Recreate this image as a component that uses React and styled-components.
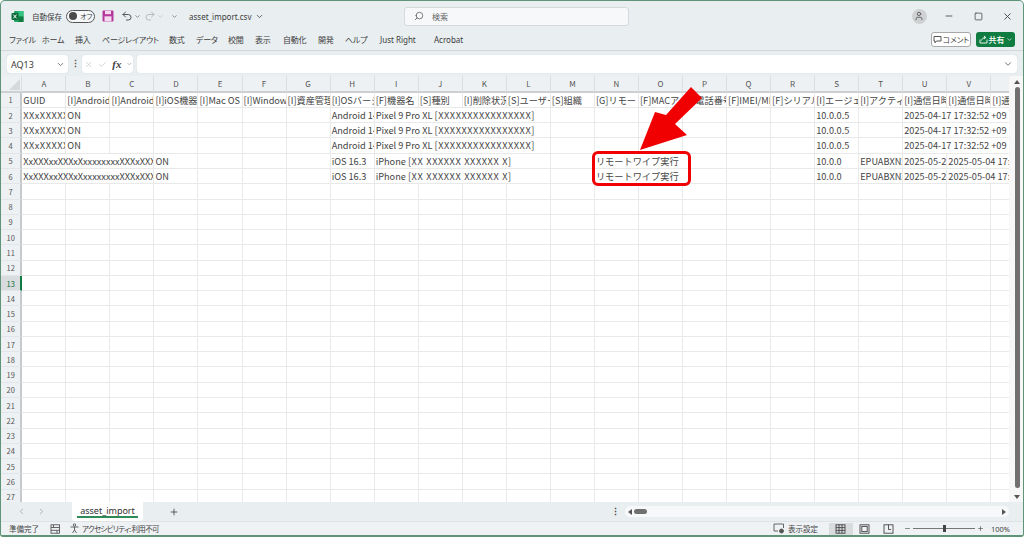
import React from "react";
import styled, { createGlobalStyle } from "styled-components";
import {
  ChevronDown,
  ChevronLeft,
  ChevronRight,
  Check,
  Minus,
  Plus,
  Redo2,
  Search,
  Square,
  Undo2,
  User,
  X,
} from "lucide-react";

const Global = createGlobalStyle`
  html, body { margin: 0; padding: 0; background: #fff; }
  body { font-family: "Noto Sans", "Noto Sans CJK JP", sans-serif; }
`;

const Window = styled.div`
  position: relative;
  box-sizing: border-box;
  width: 1024px;
  height: 537px;
  display: flex;
  flex-direction: column;
  overflow: hidden;
  background: #e9eef1;
  border: 1px solid #5f9478;
  border-bottom-width: 2px;
  border-radius: 5px 5px 3px 3px;
  color: #3c3c3c;
`;

const TitleBar = styled.div`
  height: 30px;
  flex: none;
  display: flex;
  align-items: center;
  padding: 0 0 0 10px;
  font-size: 8px;
  font-feature-settings: "palt";
`;

const AutoSave = styled.span`
  margin-left: 8px;
  width: 34px;
  font-size: 7.5px;
`;

const Toggle = styled.span`
  box-sizing: border-box;
  width: 29px;
  height: 13px;
  border: 1px solid #555;
  border-radius: 7px;
  display: flex;
  align-items: center;
  gap: 3px;
  padding-left: 2px;
  font-size: 7px;
  background: #f5f7f8;

  &::before {
    content: "";
    width: 8px;
    height: 8px;
    border-radius: 50%;
    background: #4a4a4a;
  }
`;

const TitleIcons = styled.div`
  display: flex;
  align-items: center;
  margin-left: 7px;
  width: 87px;
  color: #555;
`;

const FileName = styled.span`
  display: flex;
  align-items: center;
  gap: 4px;
  width: 215px;
  font-size: 8px;
`;

const SearchBox = styled.div`
  box-sizing: border-box;
  width: 225px;
  height: 19px;
  display: flex;
  align-items: center;
  gap: 8px;
  padding-left: 9px;
  background: #f6f8f9;
  border: 1px solid #d6d9db;
  border-radius: 3px;
  font-size: 8px;
  color: #666;
`;

const WindowControls = styled.div`
  margin-left: auto;
  display: flex;
  align-items: center;
  padding-right: 10px;
  gap: 19.5px;
  color: #444;
`;

const Avatar = styled.span`
  width: 15px;
  height: 15px;
  border-radius: 50%;
  background: #cfd1d2;
  display: flex;
  align-items: center;
  justify-content: center;
  margin-right: -2px;
  color: #555;
`;

const MenuBar = styled.div`
  height: 20px;
  flex: none;
  box-sizing: border-box;
  display: flex;
  align-items: center;
  padding: 0 8px 2px 8px;
  border-bottom: 1px solid #d3d7da;
  font-size: 8px;
  font-feature-settings: "palt";
`;

const MenuItem = styled.span`
  width: ${(p) => p.$w}px;
  flex: none;
  white-space: nowrap;
  letter-spacing: ${(p) => (p.$latin ? 0 : -0.2)}px;
`;

const CommentButton = styled.span`
  margin-left: auto;
  box-sizing: border-box;
  width: 40px;
  height: 15px;
  display: flex;
  align-items: center;
  justify-content: center;
  gap: 1px;
  background: #fff;
  border: 1px solid #a8a8a8;
  border-radius: 3px;
  font-size: 7.5px;
`;

const ShareButton = styled.span`
  margin-left: 5px;
  width: 39px;
  height: 15px;
  display: flex;
  align-items: center;
  justify-content: center;
  gap: 1px;
  background: #107c41;
  border-radius: 3px;
  color: #fff;
  font-size: 8px;
  font-weight: 500;
`;

const FormulaBar = styled.div`
  height: 25px;
  flex: none;
  box-sizing: border-box;
  display: flex;
  align-items: flex-start;
  padding: 4px 6px 0 6px;
  font-size: 9px;
`;

const FormulaField = styled.div`
  box-sizing: border-box;
  height: 18px;
  display: flex;
  align-items: center;
  background: #fff;
  border-radius: 3px;
  box-shadow: 0 0 1px #c4c8ca;
`;

const NameBox = styled(FormulaField)`
  width: 61px;
  justify-content: space-between;
  padding: 0 3px 0 4px;
`;

const Dots = styled.span`
  width: 14px;
  height: 18px;
  line-height: 18px;
  text-align: center;
  font-weight: 700;
  color: #555;
`;

const FnBox = styled(FormulaField)`
  width: 51px;
  margin-right: 4px;
  gap: 5px;
  padding-left: 2px;
  color: #c9c9c9;
`;

const Fx = styled.span`
  font-family: "Liberation Serif", serif;
  font-style: italic;
  font-weight: 700;
  font-size: 11px;
  color: #444;
`;

const FormulaInput = styled(FormulaField)`
  flex: 1;
  justify-content: flex-end;
  padding-right: 4px;
  color: #555;
`;

const Sheet = styled.div`
  display: flex;
  flex: none;
  height: 426px;
  background: #fff;
`;

const Grid = styled.div`
  flex: 1;
  min-width: 0;
  overflow: hidden;
  font-family: "Noto Sans CJK JP", sans-serif;
`;

const Row = styled.div`
  display: grid;
  grid-template-columns: 21.3px repeat(23, 44.05px);
  height: ${(p) => (p.$head ? 16.7 : 15.28)}px;
  box-sizing: border-box;
`;

const ColHead = styled.div`
  box-sizing: border-box;
  display: flex;
  align-items: center;
  justify-content: center;
  background: #eef1f3;
  border-right: 1px solid #dcdfe1;
  border-bottom: 2px solid #cdd0d2;
  font-size: 8px;
  color: #555;
`;

const Corner = styled(ColHead)`
  position: relative;
  overflow: hidden;

  &::after {
    content: "";
    position: absolute;
    right: 1px;
    bottom: 1px;
    border-style: solid;
    border-width: 0 0 11px 11px;
    border-color: transparent transparent #d6d9db transparent;
  }
`;

const RowHead = styled.div`
  box-sizing: border-box;
  display: flex;
  align-items: center;
  justify-content: center;
  background: ${(p) => (p.$active ? "#d9dcde" : "#eef1f3")};
  border-right: 2px solid ${(p) => (p.$active ? "#107c41" : "#c6c9cb")};
  border-bottom: 1px solid #e3e6e8;
  font-size: 7.5px;
  color: ${(p) => (p.$active ? "#0e6b38" : "#555")};
`;

const Cell = styled.div`
  box-sizing: border-box;
  grid-column: span ${(p) => p.$span || 1};
  border-right: 1px solid #e9e9e9;
  border-bottom: 1px solid #e9e9e9;
  padding-left: 1px;
  overflow: hidden;
  white-space: nowrap;
  font-size: 9.2px;
  line-height: 14px;
  color: #444;
`;

const Wide = styled.span`
  letter-spacing: 0.55px;
  word-spacing: 0.5px;
`;

const VScroll = styled.div`
  flex: none;
  width: 14px;
  display: flex;
  flex-direction: column;
  align-items: center;
  background: #f7f7f7;
  padding: 0 0 3px 2px;
  box-sizing: border-box;
`;

const ScrollArrow = styled.span`
  width: 0;
  height: 0;
  flex: none;
  border-style: solid;
  border-color: transparent;
  ${(p) =>
    p.$dir === "up" && "border-width: 0 3px 4px; border-bottom-color: #555; margin: 4px 0 3px;"}
  ${(p) =>
    p.$dir === "down" && "border-width: 4px 3px 0; border-top-color: #555; margin: 7px 0 0;"}
  ${(p) =>
    p.$dir === "left" && "border-width: 3px 4px 3px 0; border-right-color: #555; margin: 0 2px 0 3px;"}
  ${(p) =>
    p.$dir === "right" && "border-width: 3px 0 3px 4px; border-left-color: #555; margin: 0 3px 0 auto;"}
`;

const VThumb = styled.span`
  width: 5px;
  flex: 1;
  background: #707070;
  border-radius: 3px;
`;

const TabBar = styled.div`
  height: 19px;
  flex: none;
  display: flex;
  align-items: stretch;
  padding-left: 15px;
`;

const TabNav = styled.div`
  box-sizing: border-box;
  width: 56px;
  padding-left: 1px;
  display: flex;
  align-items: center;
  gap: 11px;
  color: #9a9fa2;
`;

const SheetTab = styled.div`
  box-sizing: border-box;
  width: 71px;
  background: #fff;
  border-radius: 0 0 3px 3px;
  display: flex;
  align-items: center;
  justify-content: center;
  padding-bottom: 3px;
  font-size: 9px;
  color: #333;
  position: relative;

  &::after {
    content: "";
    position: absolute;
    left: 5px;
    right: 5px;
    bottom: 3px;
    height: 2px;
    background: #2e8b57;
  }
`;

const TabAdd = styled.div`
  box-sizing: border-box;
  width: 467px;
  display: flex;
  align-items: center;
  padding-left: 26px;
  color: #444;
`;

const TabDots = styled.div`
  width: 11px;
  display: flex;
  align-items: center;
  justify-content: center;
  font-size: 9px;
  font-weight: 700;
  color: #444;
`;

const HScroll = styled.div`
  width: 384px;
  height: 11px;
  align-self: center;
  display: flex;
  align-items: center;
  background: #f7f8f9;
  border-radius: 5px;
  margin-left: 4px;
`;

const HThumb = styled.span`
  width: 13px;
  height: 5px;
  background: #707070;
  border-radius: 3px;
`;

const StatusBar = styled.div`
  flex: 1;
  box-sizing: border-box;
  display: flex;
  align-items: center;
  padding: 0 13px 0 8px;
  font-size: 7.5px;
  color: #444;
  border-top: 1px solid #dfe3e5;
  background: #eff2f4;
  font-feature-settings: "palt";
`;

const StatusGroup = styled.span`
  display: flex;
  align-items: center;
  gap: ${(p) => p.$gap ?? 3}px;
  margin-left: ${(p) => p.$ml || 0}px;
`;

const AccessLabel = styled.span`
  letter-spacing: -0.7px;
`;

const DisplayGroup = styled(StatusGroup)`
  margin-left: auto;
`;

const ViewButton = styled.span`
  width: 24px;
  height: 12px;
  display: flex;
  align-items: center;
  justify-content: center;
  background: ${(p) => (p.$active ? "#d9dcde" : "transparent")};
`;

const Slider = styled.span`
  position: relative;
  width: 62px;
  height: 1px;
  background: #777;

  &::after {
    content: "";
    position: absolute;
    left: 30px;
    top: -3px;
    width: 3px;
    height: 7px;
    background: #444;
  }
`;

const Callout = styled.div`
  position: absolute;
  left: 591px;
  top: 150px;
  width: 99px;
  height: 35px;
  box-sizing: border-box;
  border: 3px solid #f00000;
  border-radius: 6px;
  pointer-events: none;
`;

const ArrowMark = styled.svg`
  position: absolute;
  left: 635px;
  top: 82px;
  pointer-events: none;
`;

const ExcelIcon = () => (
  <svg width="13" height="13" viewBox="0 0 13 13">
    <rect x="3" y="1" width="9.5" height="11" rx="1" fill="#21a366" />
    <rect x="7.5" y="1" width="5" height="5.5" fill="#33c481" />
    <rect x="7.5" y="6.5" width="5" height="5.5" fill="#107c41" />
    <rect x="0.5" y="3" width="7" height="7" rx="1" fill="#0b6a3a" />
    <path d="M2.3 4.6 L5.6 8.4 M5.6 4.6 L2.3 8.4" stroke="#fff" strokeWidth="1" />
  </svg>
);

const SaveIcon = () => (
  <svg width="12" height="12" viewBox="0 0 12 12">
    <rect x="0.5" y="0.5" width="11" height="11" rx="1" fill="#b4379c" />
    <rect x="3" y="0.8" width="6" height="3.4" fill="#f3d8ee" />
    <rect x="2.5" y="6.3" width="7" height="5" fill="#f3d8ee" />
  </svg>
);

const ShareIcon = () => (
  <svg width="9" height="9" viewBox="0 0 9 9" fill="none" stroke="#fff" strokeWidth="0.9">
    <path d="M1 4.5 V8 H8 V4.5" />
    <path d="M2.5 5.5 C3 3.5 4.5 2.5 6.5 2.5 M5 1 L6.8 2.5 L5 4" />
  </svg>
);

const CommentIcon = () => (
  <svg width="9" height="9" viewBox="0 0 9 9" fill="none" stroke="#444" strokeWidth="0.9">
    <path d="M1 1.5 H8 V6 H3.5 L2 7.8 V6 H1 Z" />
  </svg>
);

const MacroIcon = () => (
  <svg width="11" height="10" viewBox="0 0 11 10" fill="none" stroke="#555" strokeWidth="0.9">
    <rect x="1" y="0.8" width="8.5" height="8.4" />
    <path d="M1 3.5 H9.5 M1 6.3 H9.5 M3.5 0.8 V3.5 M7 6.3 V9.2" />
  </svg>
);

const AccessIcon = () => (
  <svg width="11" height="11" viewBox="0 0 11 11" fill="none" stroke="#555" strokeWidth="0.9">
    <circle cx="5.5" cy="2" r="1.2" />
    <path d="M1.5 4 H9.5 M5.5 4 V7 M5.5 7 L3.5 10 M5.5 7 L7.5 10" />
  </svg>
);

const DisplayIcon = () => (
  <svg width="12" height="11" viewBox="0 0 12 11" fill="none" stroke="#555" strokeWidth="0.9">
    <path d="M10.5 5 V1 H1 V8 H5" />
    <circle cx="8.5" cy="8" r="2" fill="#555" />
  </svg>
);

const NormalViewIcon = () => (
  <svg width="11" height="10" viewBox="0 0 11 10" fill="none" stroke="#444" strokeWidth="0.9">
    <rect x="1" y="0.8" width="9" height="8.4" />
    <path d="M1 3.6 H10 M1 6.4 H10 M4 0.8 V9.2 M7 0.8 V9.2" />
  </svg>
);

const LayoutViewIcon = () => (
  <svg width="11" height="10" viewBox="0 0 11 10" fill="none" stroke="#444" strokeWidth="0.9">
    <rect x="1" y="0.8" width="9" height="8.4" />
    <rect x="2.8" y="2.4" width="5.4" height="5.2" />
  </svg>
);

const BreakViewIcon = () => (
  <svg width="11" height="10" viewBox="0 0 11 10" fill="none" stroke="#444" strokeWidth="0.9">
    <rect x="1" y="0.8" width="9" height="8.4" />
    <path d="M5.5 0.8 V5.5 M5.5 5.5 H8" />
  </svg>
);

const menus = [
  ["ファイル", 33],
  ["ホーム", 33],
  ["挿入", 27],
  ["ページレイアウト", 67],
  ["数式", 27],
  ["データ", 32],
  ["校閲", 27],
  ["表示", 28],
  ["自動化", 35],
  ["開発", 27],
  ["ヘルプ", 35],
  ["Just Right", 54, true],
  ["Acrobat", 50, true],
];

const headers = [
  "GUID",
  "[I]Android",
  "[I]Android",
  "[I]iOS機器",
  "[I]Mac OS",
  "[I]Windows",
  "[I]資産管理",
  "[I]OSバージョン",
  "[F]機器名",
  "[S]種別",
  "[I]削除状況",
  "[S]ユーザー",
  "[S]組織",
  "[G]リモート",
  "[F]MACアドレス",
  "[F]電話番号",
  "[F]IMEI/MEID",
  "[F]シリアル",
  "[I]エージェント",
  "[I]アクティブ",
  "[I]通信日時",
  "[I]通信日時",
  "[I]通信",
];

const androidRow = [
  [0, <Wide>XXxXXXXXXXX</Wide>],
  [1, "ON"],
  [7, "Android 14"],
  [8, <>Pixel 9 Pro XL <Wide>[XXXXXXXXXXXXXXXX]</Wide></>, 4],
  [18, "10.0.0.5"],
  [20, "2025-04-17 17:32:52 +09", 3],
];

const iosRow = [
  [0, "XxXXXxxXXXxXxxxxxxxxXXXxXXXXX", 3],
  [3, "ON"],
  [7, "iOS 16.3"],
  [8, <>iPhone <Wide>[XX XXXXXX XXXXXX X]</Wide></>, 4],
  [13, "リモートワイプ実行", 3],
  [18, "10.0.0"],
  [19, "EPUABXNXXX"],
  [20, "2025-05-2XXX"],
  [21, "2025-05-04 17:32", 2],
];

const rowData = { 2: androidRow, 3: androidRow, 4: androidRow, 5: iosRow, 6: iosRow };

function DataCells({ items = [] }) {
  const cells = [];
  let col = 0;
  while (col < 23) {
    const item = items.find((i) => i[0] === col);
    if (item) {
      cells.push(
        <Cell key={col} $span={item[2]}>
          {item[1]}
        </Cell>
      );
      col += item[2] || 1;
    } else {
      cells.push(<Cell key={col} />);
      col += 1;
    }
  }
  return cells;
}

const letters = "ABCDEFGHIJKLMNOPQRSTUV".split("");
const rowNumbers = Array.from({ length: 26 }, (_, i) => i + 2);

export default function App() {
  return (
    <Window>
      <Global />
      <TitleBar>
        <ExcelIcon />
        <AutoSave>自動保存</AutoSave>
        <Toggle>オフ</Toggle>
        <TitleIcons>
          <SaveIcon />
          <Undo2 size={12} style={{ marginLeft: 7 }} />
          <ChevronDown size={7} style={{ margin: "0 3px 0 1px" }} />
          <Redo2 size={12} color="#b5b9bb" />
          <ChevronDown size={7} color="#b5b9bb" style={{ margin: "0 7px 0 1px" }} />
          <ChevronDown size={7} />
        </TitleIcons>
        <FileName>
          asset_import.csv <ChevronDown size={9} />
        </FileName>
        <SearchBox>
          <Search size={10} style={{ transform: "scaleX(-1)" }} />
          検索
        </SearchBox>
        <WindowControls>
          <Avatar>
            <User size={10} />
          </Avatar>
          <Minus size={10} />
          <Square size={9} />
          <X size={11} />
        </WindowControls>
      </TitleBar>

      <MenuBar>
        {menus.map(([name, w, latin]) => (
          <MenuItem key={name} $w={w} $latin={latin}>
            {name}
          </MenuItem>
        ))}
        <CommentButton>
          <CommentIcon />
          コメント
        </CommentButton>
        <ShareButton>
          <ShareIcon />
          共有
          <ChevronDown size={7} />
        </ShareButton>
      </MenuBar>

      <FormulaBar>
        <NameBox>
          AQ13
          <ChevronDown size={9} color="#555" />
        </NameBox>
        <Dots>⋮</Dots>
        <FnBox>
          <X size={11} />
          <Check size={11} />
          <Fx>fx</Fx>
          <ChevronDown size={8} color="#888" />
        </FnBox>
        <FormulaInput>
          <ChevronDown size={10} />
        </FormulaInput>
      </FormulaBar>

      <Sheet>
        <Grid>
          <Row $head>
            <Corner />
            {letters.map((l) => (
              <ColHead key={l}>{l}</ColHead>
            ))}
            <ColHead />
          </Row>
          <Row>
            <RowHead>1</RowHead>
            {headers.map((h, i) => (
              <Cell key={i}>{h}</Cell>
            ))}
          </Row>
          {rowNumbers.map((n) => (
            <Row key={n}>
              <RowHead $active={n === 13}>{n}</RowHead>
              <DataCells items={rowData[n]} />
            </Row>
          ))}
        </Grid>
        <VScroll>
          <ScrollArrow $dir="up" />
          <VThumb />
          <ScrollArrow $dir="down" />
        </VScroll>
      </Sheet>

      <TabBar>
        <TabNav>
          <ChevronLeft size={9} />
          <ChevronRight size={9} />
        </TabNav>
        <SheetTab>asset_import</SheetTab>
        <TabAdd>
          <Plus size={10} />
        </TabAdd>
        <TabDots>⋮</TabDots>
        <HScroll>
          <ScrollArrow $dir="left" />
          <HThumb />
          <ScrollArrow $dir="right" />
        </HScroll>
      </TabBar>

      <StatusBar>
        <span>準備完了</span>
        <StatusGroup $ml={11}>
          <MacroIcon />
        </StatusGroup>
        <StatusGroup $ml={8} $gap={2}>
          <AccessIcon />
          <AccessLabel>アクセシビリティ: 利用不可</AccessLabel>
        </StatusGroup>
        <DisplayGroup>
          <DisplayIcon />
          表示設定
        </DisplayGroup>
        <StatusGroup $ml={11} $gap={0}>
          <ViewButton $active>
            <NormalViewIcon />
          </ViewButton>
          <ViewButton>
            <LayoutViewIcon />
          </ViewButton>
          <ViewButton>
            <BreakViewIcon />
          </ViewButton>
        </StatusGroup>
        <StatusGroup $ml={3} $gap={2}>
          <Minus size={7} />
          <Slider />
          <Plus size={7} />
        </StatusGroup>
        <StatusGroup $ml={7}>100%</StatusGroup>
      </StatusBar>

      <Callout />
      <ArrowMark width="72" height="72" viewBox="0 0 72 72">
        <path d="M4 67 L19 29 L30 32 L55 4 L66 15 L39 41 L51 52 Z" fill="#f00000" />
      </ArrowMark>
    </Window>
  );
}
